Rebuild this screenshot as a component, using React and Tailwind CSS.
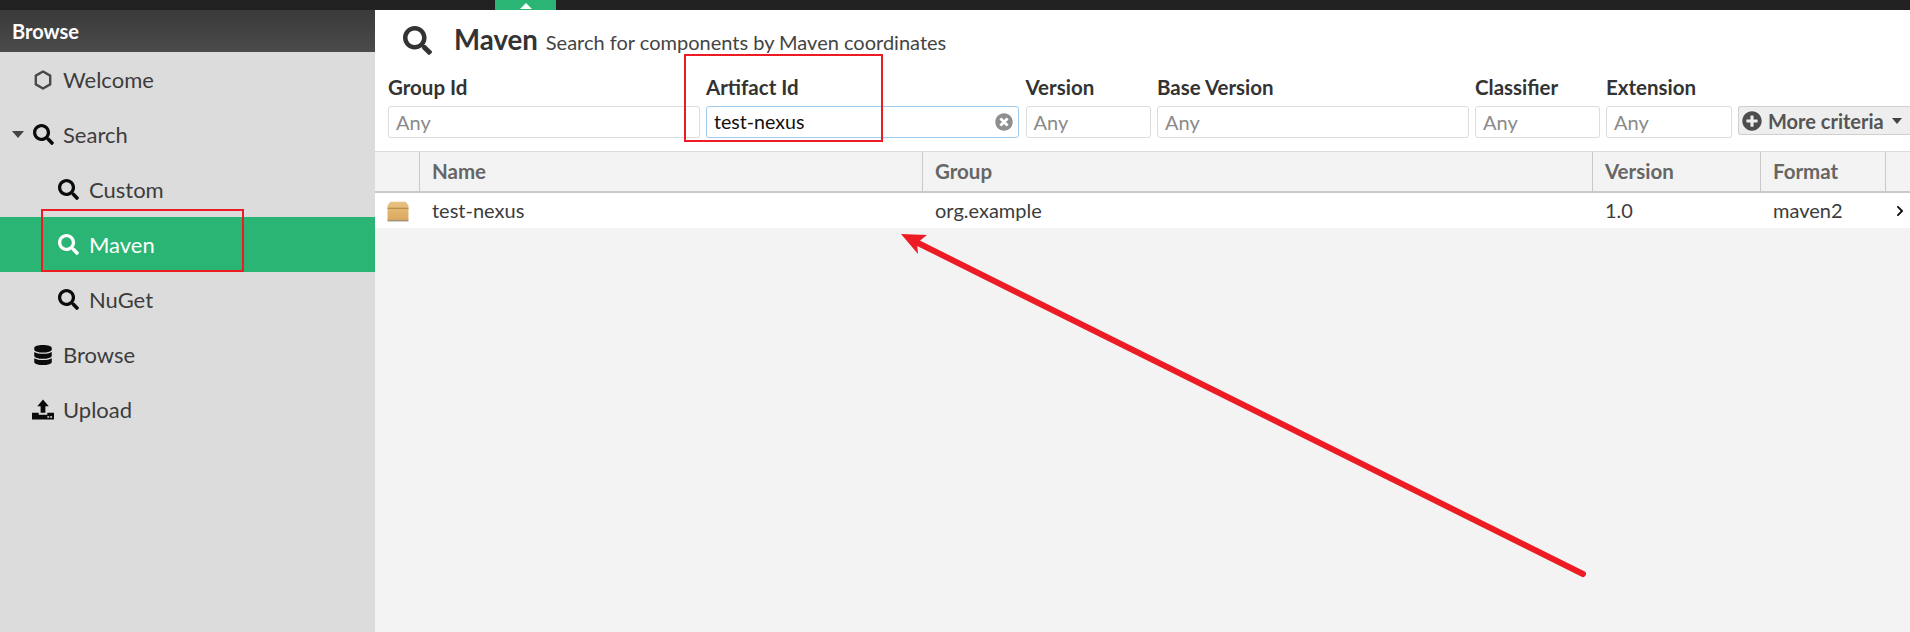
import React from "react";
import { FaSearch, FaDatabase, FaPlusCircle, FaTimesCircle, FaChevronRight } from "react-icons/fa";

function Hex() {
  return (
    <svg width="18" height="20" viewBox="0 0 18 20" className="text-[#4a4a4a]">
      <path d="M9 1.5 16.2 5.6V14.4L9 18.5 1.8 14.4V5.6Z" fill="none" stroke="currentColor" strokeWidth="2.4" strokeLinejoin="round" />
    </svg>
  );
}

function Upload() {
  return (
    <svg width="23" height="23" viewBox="0 0 23 23">
      <path d="M11.5 1 17.5 8H14V15H9V8H5.5Z" fill="#0b0b0b" />
      <path d="M0 15H7V17H16V15H23V22H0Z" fill="#0b0b0b" />
      <rect x="16" y="18.5" width="2" height="1.6" fill="#dcdcdc" />
      <rect x="19" y="18.5" width="2" height="1.6" fill="#dcdcdc" />
    </svg>
  );
}

function Item({ icon, label, indent, caret, active }) {
  return (
    <div className={`h-[55px] flex items-center ${active ? "bg-[#2ab574] text-white" : "text-[#3c3c3c]"}`}>
      <div className={`flex items-center ${indent ? "pl-[57px]" : caret ? "pl-[12px]" : "pl-[32px]"}`}>
        {caret && <div className="w-0 h-0 border-x-[6px] border-x-transparent border-t-[7px] border-t-[#444] mr-[8px]" />}
        <div className={`w-[22px] flex justify-center ${active ? "text-white" : "text-[#0b0b0b]"}`}>{icon}</div>
        <span className={`${indent ? "ml-[10px]" : "ml-[9px]"} text-[22px] leading-none`}>{label}</span>
      </div>
    </div>
  );
}

function Field({ label, w, value, focused }) {
  return (
    <div className="flex flex-col shrink-0" style={{ width: w }}>
      <div className="h-[32px] mb-[3px] flex items-center text-[20.5px] font-bold text-[#333] leading-none">{label}</div>
      <div className={`h-[32px] rounded-[3px] border bg-white flex items-center pl-[7px] pr-[5px] text-[20px] ${focused ? "border-[#9ecbef]" : "border-[#dddddd]"}`}>
        {value ? <span className="flex-1 text-[#111] text-[19.6px]">{value}</span> : <span className="flex-1 text-[#8a8a8a]">Any</span>}
        {value && <FaTimesCircle className="text-[#8f8f8f] text-[18px]" />}
      </div>
    </div>
  );
}

function Box() {
  return (
    <svg width="22" height="22" viewBox="0 0 20 20">
      <defs>
        <linearGradient id="bx" x1="0" y1="0" x2="0" y2="1">
          <stop offset="0" stopColor="#e8c384" />
          <stop offset="1" stopColor="#dca85c" />
        </linearGradient>
      </defs>
      <path d="M3 1.5H17L19.5 5V18.5H.5V5Z" fill="url(#bx)" />
      <rect x=".5" y="7" width="19" height="1.2" fill="#b98f50" />
      <rect x=".5" y="18" width="19" height="1.5" fill="#a89478" />
    </svg>
  );
}

const headCell = "flex items-center pl-[12px] border-r border-[#c9c9c9] text-[20.5px] font-bold text-[#666]";
const rowCell = "flex items-center pl-[12px] pb-[2px] text-[20px] text-[#3c3c3c]";

export default function App() {
  return (
    <div className="relative h-[632px] w-[1910px] overflow-hidden bg-[#f3f3f3] font-['Lato','Liberation_Sans',sans-serif]">
      <div className="h-[10px] bg-[#222222] pl-[495px]">
        <div className="w-[61px] h-[10px] bg-[#2ab574] flex justify-center items-end">
          <div className="w-0 h-0 border-x-[6px] border-x-transparent border-b-[6px] border-b-white mb-[1px]" />
        </div>
      </div>
      <div className="flex h-[622px]">
        <aside className="w-[375px] shrink-0 bg-[#dcdcdc]">
          <div className="h-[42px] bg-gradient-to-b from-[#3a3a3a] to-[#4b4b4b] flex items-center pl-[12px] text-white font-bold text-[20px]">Browse</div>
          <Item icon={<Hex />} label="Welcome" />
          <Item caret icon={<FaSearch className="text-[21px]" />} label="Search" />
          <Item indent icon={<FaSearch className="text-[21px]" />} label="Custom" />
          <Item indent active icon={<FaSearch className="text-[21px]" />} label="Maven" />
          <Item indent icon={<FaSearch className="text-[21px]" />} label="NuGet" />
          <Item icon={<FaDatabase className="text-[20px]" />} label="Browse" />
          <Item icon={<Upload />} label="Upload" />
        </aside>
        <main className="flex-1 min-w-0">
          <div className="h-[142px] bg-white border-b border-[#dcdcdc] overflow-hidden">
            <div className="h-[54px] flex items-center pl-[28px] pt-[6px]">
              <FaSearch className="text-[29px] text-[#333]" />
              <span className="ml-[22px] text-[27.6px] font-bold text-[#333] leading-none">Maven</span>
              <span className="ml-[8px] text-[20px] text-[#444] leading-none mt-[3px]">Search for components by Maven coordinates</span>
            </div>
            <div className="flex gap-[6.5px] pl-[13px] mt-[7px]">
              <Field label="Group Id" w="311.5px" />
              <Field label="Artifact Id" w="313px" value="test-nexus" focused />
              <Field label="Version" w="125px" />
              <Field label="Base Version" w="311.5px" />
              <Field label="Classifier" w="124.5px" />
              <Field label="Extension" w="125.5px" />
              <div className="flex flex-col grow">
                <div className="h-[35px]" />
                <div className="h-[29px] rounded-l-[3px] border border-r-0 border-[#cfcfcf] bg-[#eeeeee] flex items-center pl-[3px] text-[20px] font-bold text-[#555] leading-none">
                  <FaPlusCircle className="text-[20px] text-[#4d4d4d] mr-[6px]" />
                  More criteria
                  <div className="ml-[8px] w-0 h-0 border-x-[5.5px] border-x-transparent border-t-[6px] border-t-[#444]" />
                </div>
              </div>
            </div>
          </div>
          <div className="grid grid-cols-[45px_503px_670px_168px_125px_24px] h-[41px] bg-[#f3f3f3] border-b-2 border-[#c9c9c9]">
            <div className="border-r border-[#c9c9c9]" />
            <div className={headCell}>Name</div>
            <div className={headCell}>Group</div>
            <div className={headCell}>Version</div>
            <div className={headCell}>Format</div>
            <div />
          </div>
          <div className="grid grid-cols-[45px_503px_670px_168px_125px_24px] h-[35px] bg-white">
            <div className="flex items-center pl-[12px]"><Box /></div>
            <div className={rowCell}>test-nexus</div>
            <div className={rowCell}>org.example</div>
            <div className={rowCell}>1.0</div>
            <div className={rowCell}>maven2</div>
            <div className="flex items-center justify-end pr-[4px]"><FaChevronRight className="text-[12px] text-[#111]" /></div>
          </div>
        </main>
      </div>

      <div className="absolute left-[41px] top-[209px] w-[203px] h-[63px] border-2 border-[#ed1c24]" />
      <div className="absolute left-[684px] top-[54px] w-[199px] h-[88px] border-2 border-[#ed1c24]" />
      <svg className="absolute left-0 top-0 pointer-events-none" width="1910" height="632">
        <line x1="1583" y1="574" x2="918" y2="243" stroke="#ed1c24" strokeWidth="6" strokeLinecap="round" />
        <path d="M901 234 927 235 917 243 918 254Z" fill="#ed1c24" />
      </svg>
    </div>
  );
}
